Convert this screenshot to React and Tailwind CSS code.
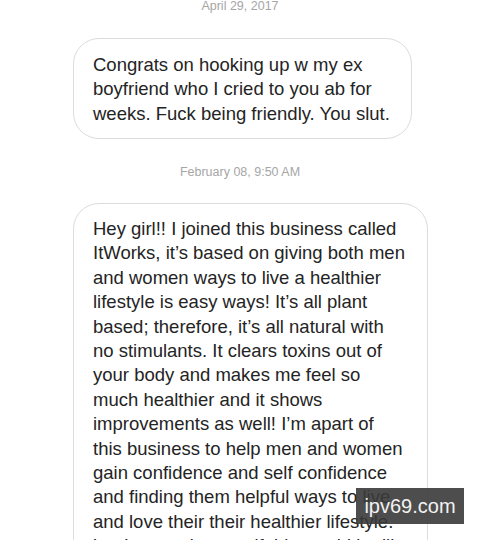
import React from "react";

const first = [
  "Congrats on hooking up w my ex",
  "boyfriend who I cried to you ab for",
  "weeks. Fuck being friendly. You slut.",
];

const second = [
  "Hey girl!! I joined this business called",
  "ItWorks, it\u2019s based on giving both men",
  "and women ways to live a healthier",
  "lifestyle is easy ways! It\u2019s all plant",
  "based; therefore, it\u2019s all natural with",
  "no stimulants. It clears toxins out of",
  "your body and makes me feel so",
  "much healthier and it shows",
  "improvements as well! I\u2019m apart of",
  "this business to help men and women",
  "gain confidence and self confidence",
  "and finding them helpful ways to live",
  "and love their their healthier lifestyle.",
  "but I wanted to see if this would be like",
];

function Bubble({ lines, className }) {
  return (
    <div className={"ml-[73px] rounded-[26px] border border-[#dcdcdc] px-[19px] text-[18.5px] leading-[24.4px] text-[#242424] " + className}>
      {lines.map((l, i) => (
        <div key={i} className="whitespace-nowrap">{l}</div>
      ))}
    </div>
  );
}

export default function App() {
  return (
    <div className="relative w-[480px] h-[540px] overflow-hidden bg-white font-['Liberation_Sans',Arial,sans-serif]">
      <div className="text-center text-[12.5px] leading-[12px] text-[#a6a6a6]">April 29, 2017</div>
      <Bubble lines={first} className="mt-[26px] w-[339px] h-[101px] pt-[14px]" />
      <div className="mt-[27px] text-center text-[12.5px] leading-[12px] text-[#a6a6a6]">February 08, 9:50 AM</div>
      <Bubble lines={second} className="mt-[25px] w-[355px] pt-[13px] pb-4" />
      <div className="absolute left-[356px] top-[488px] w-[108px] h-[36px] bg-[#3a3a3a]/90 flex items-center justify-center text-[20px] text-[#f2f2f2]">
        ipv69.com
      </div>
    </div>
  );
}
